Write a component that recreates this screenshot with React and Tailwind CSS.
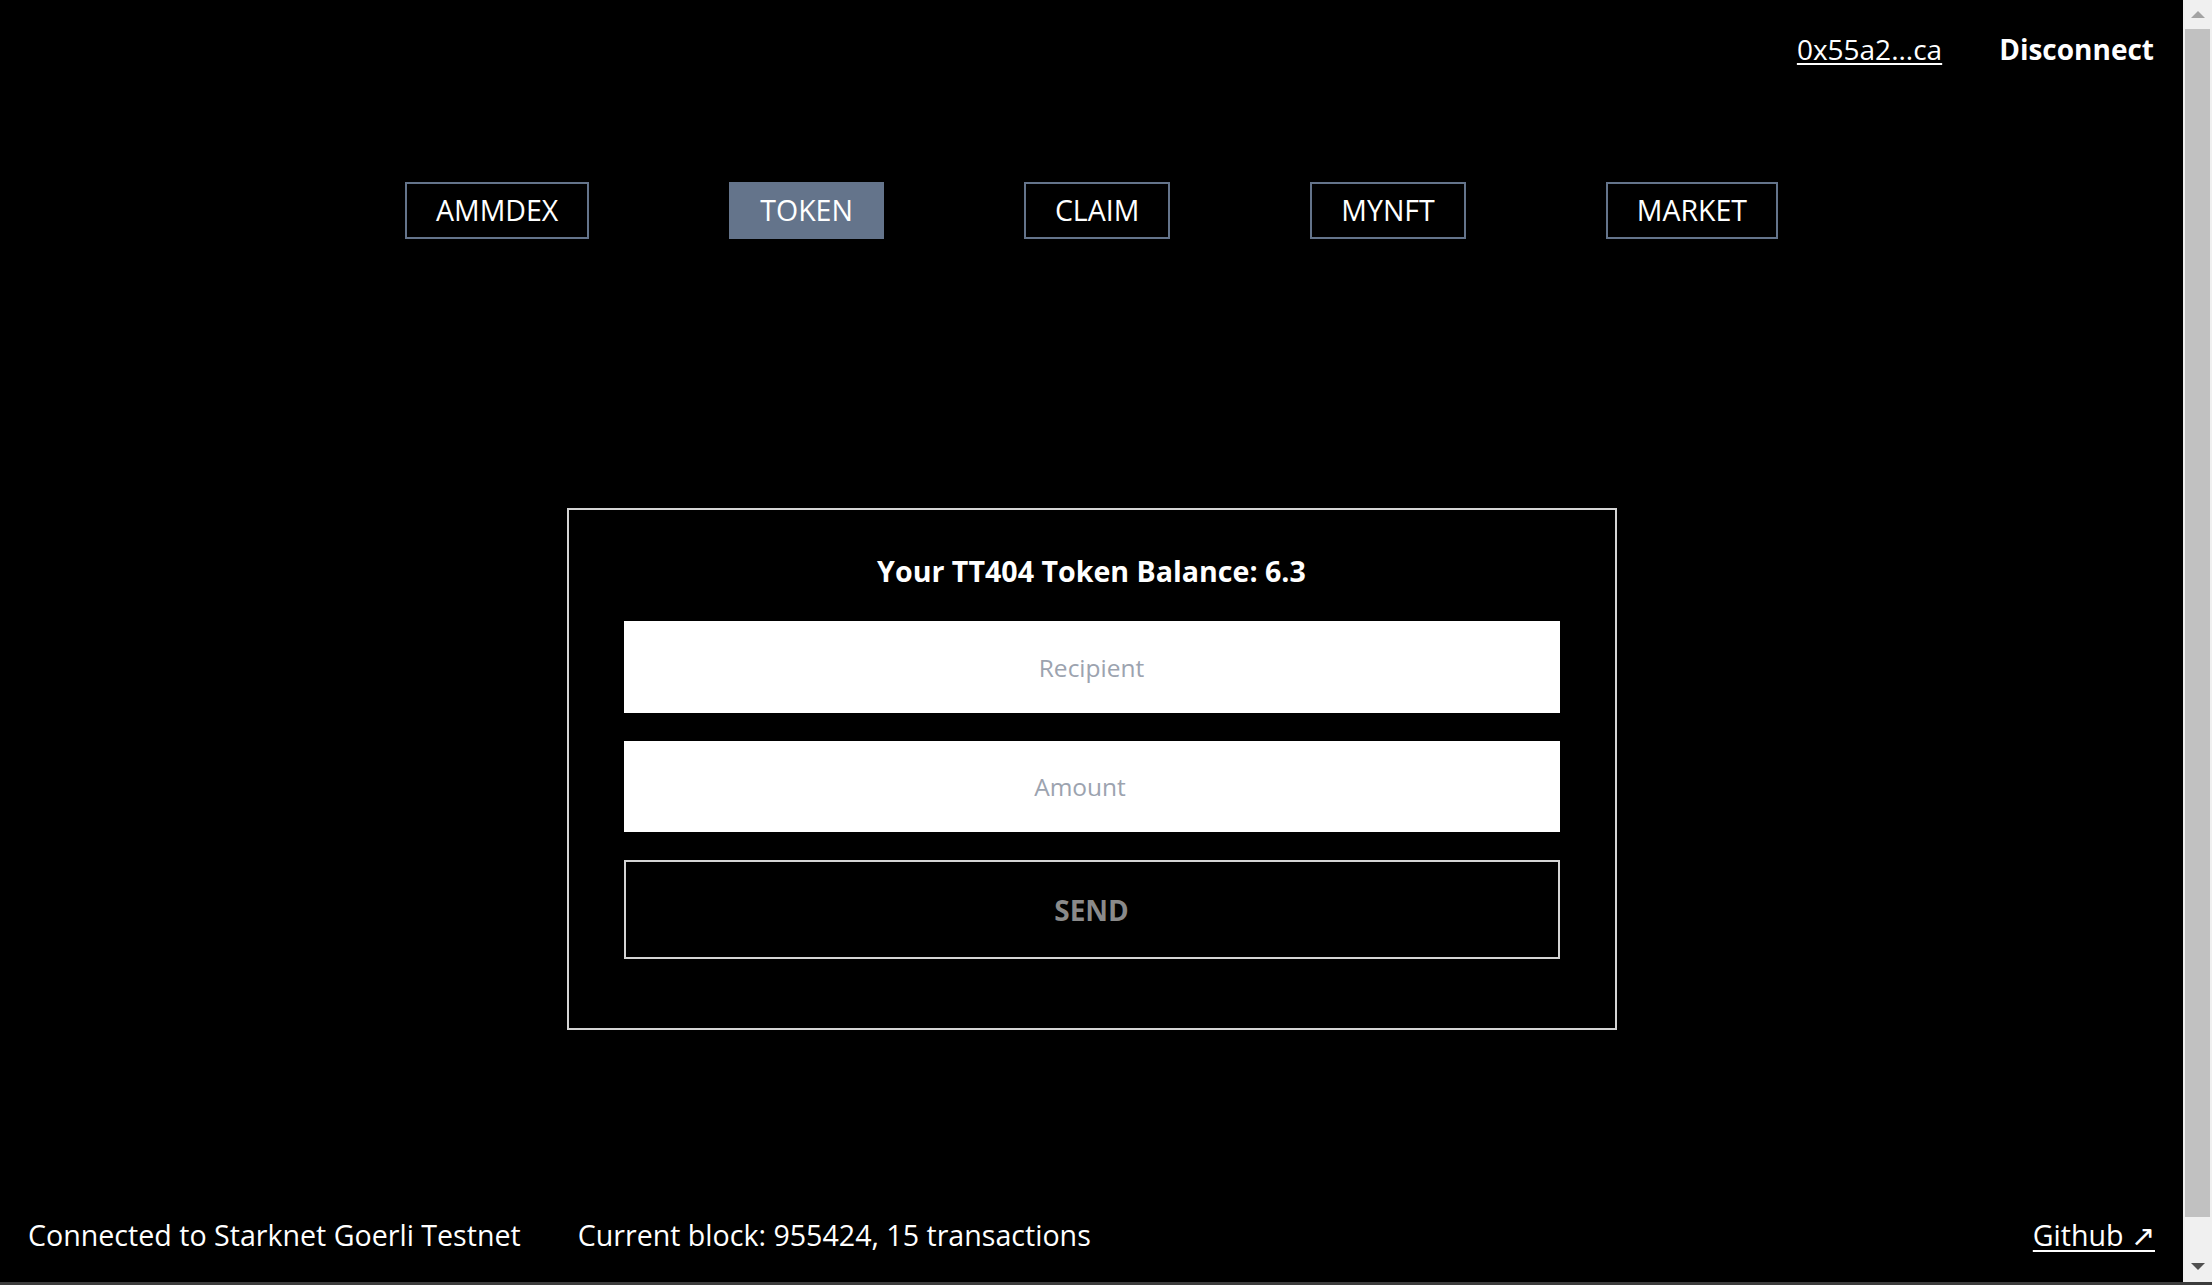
import { useState } from 'react'

const tabs = ['AMMDEX', 'TOKEN', 'CLAIM', 'MYNFT', 'MARKET']

function Scrollbar() {
  return (
    <div className="w-[29px] shrink-0 bg-[#f0f0f0] flex flex-col">
      <div className="h-[29px] flex items-center justify-center">
        <svg width="14" height="8" viewBox="0 0 14 8"><path d="M7 0 L14 7 L0 7 Z" fill="#a3a3a3" /></svg>
      </div>
      <div className="h-[1188px] mx-[2px] bg-[#c1c1c1]" />
      <div className="flex-1" />
      <div className="h-[29px] flex items-start justify-center pt-[10px]">
        <svg width="14" height="8" viewBox="0 0 14 8"><path d="M0 0 L14 0 L7 7 Z" fill="#505050" /></svg>
      </div>
    </div>
  )
}

export default function App() {
  const [active, setActive] = useState('TOKEN')
  const [recipient, setRecipient] = useState('')
  const [amount, setAmount] = useState('')

  return (
    <div className="h-[1285px] flex flex-col bg-black text-white font-['Open_Sans',sans-serif] overflow-hidden">
      <div className="flex-1 flex min-h-0">
        <div className="flex-1 flex flex-col min-w-0">
          <header className="flex justify-end items-center gap-[57px] pt-[28px] pr-[29px] text-[28px] leading-[42px]">
            <a href="#" className="underline underline-offset-[3px] decoration-2">0x55a2...ca</a>
            <button className="font-bold">Disconnect</button>
          </header>

          <nav className="mt-[112px] flex justify-center gap-[140px]">
            {tabs.map((t) => (
              <button
                key={t}
                onClick={() => setActive(t)}
                className={`px-[29px] py-[7px] text-[28.5px] leading-[39px] border-2 ${active === t ? 'bg-[#64748b] border-[#64748b]' : 'border-[#64748b]'}`}
              >
                {t}
              </button>
            ))}
          </nav>

          <div className="mt-[269px] mx-auto w-[1050px] border-2 border-[#d4d4d4] px-[55px] pt-[39px] pb-[69px]">
            <h2 className="text-center font-bold text-[28.6px] leading-[44px] mb-[28px]">Your TT404 Token Balance: 6.3</h2>
            <input
              value={recipient}
              onChange={(e) => setRecipient(e.target.value)}
              placeholder="Recipient"
              className="block w-full h-[92px] bg-white text-black text-center text-[24.5px] placeholder:text-[#9ca3af] outline-none"
            />
            <input
              type="number"
              value={amount}
              onChange={(e) => setAmount(e.target.value)}
              placeholder="Amount"
              className="block w-full h-[91px] mt-[28px] pr-[8px] bg-white text-black text-center text-[24.5px] placeholder:text-[#9ca3af] outline-none"
            />
            <button disabled className="block w-full h-[99px] mt-[28px] border-2 border-[#d4d4d4] bg-black text-[#8a8a8a] font-bold text-[28px]">SEND</button>
          </div>

          <footer className="mt-auto flex items-center px-[28px] pb-[26px] text-[28.6px] leading-[42px]">
            <span>Connected to Starknet Goerli Testnet</span>
            <span className="ml-[57px]">Current block: 955424, 15 transactions</span>
            <a href="#" className="ml-auto underline underline-offset-[4px] decoration-2">Github ↗</a>
          </footer>
        </div>
        <Scrollbar />
      </div>
      <div className="h-[3px] bg-[#3c3c3c]" />
    </div>
  )
}
